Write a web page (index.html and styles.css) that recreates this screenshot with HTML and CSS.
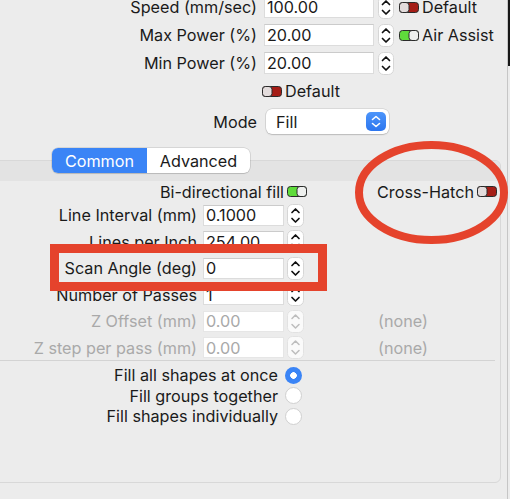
FILE: index.html
```html
<!DOCTYPE html>
<html>
<head>
<meta charset="utf-8">
<link rel="stylesheet" href="styles.css">
</head>
<body>
<div class="main">
  <section class="top">
    <div class="row">
      <span class="lbl">Speed (mm/sec)</span>
      <span class="field">100.00</span>
      <svg class="stepper" width="16" height="23" viewBox="0 0 16 23"><rect x="0.5" y="0.5" width="15" height="22" rx="5" fill="#fff" stroke="#d6d6d6"/><path d="M4.5 8.5 L8 5 L11.5 8.5" fill="none" stroke="#111" stroke-width="1.7" stroke-linecap="round" stroke-linejoin="round"/><path d="M4.5 14.5 L8 18 L11.5 14.5" fill="none" stroke="#111" stroke-width="1.7" stroke-linecap="round" stroke-linejoin="round"/></svg>
      <svg class="toggle" width="20" height="11" viewBox="0 0 20 11"><rect x="0.5" y="0.5" width="19" height="10" rx="3" fill="#a51d16" stroke="#2a2a2a"/><rect x="0.5" y="0.5" width="9.5" height="10" rx="3" fill="#e3dcdc" stroke="#2a2a2a"/></svg>
      <span class="tlbl">Default</span>
    </div>
    <div class="row">
      <span class="lbl">Max Power (%)</span>
      <span class="field">20.00</span>
      <svg class="stepper" width="16" height="23" viewBox="0 0 16 23"><rect x="0.5" y="0.5" width="15" height="22" rx="5" fill="#fff" stroke="#d6d6d6"/><path d="M4.5 8.5 L8 5 L11.5 8.5" fill="none" stroke="#111" stroke-width="1.7" stroke-linecap="round" stroke-linejoin="round"/><path d="M4.5 14.5 L8 18 L11.5 14.5" fill="none" stroke="#111" stroke-width="1.7" stroke-linecap="round" stroke-linejoin="round"/></svg>
      <svg class="toggle" width="20" height="11" viewBox="0 0 20 11"><rect x="0.5" y="0.5" width="19" height="10" rx="3" fill="#5fdc3b" stroke="#2a2a2a"/><rect x="10" y="0.5" width="9.5" height="10" rx="3" fill="#eef0ee" stroke="#2a2a2a"/></svg>
      <span class="tlbl">Air Assist</span>
    </div>
    <div class="row">
      <span class="lbl">Min Power (%)</span>
      <span class="field">20.00</span>
      <svg class="stepper" width="16" height="23" viewBox="0 0 16 23"><rect x="0.5" y="0.5" width="15" height="22" rx="5" fill="#fff" stroke="#d6d6d6"/><path d="M4.5 8.5 L8 5 L11.5 8.5" fill="none" stroke="#111" stroke-width="1.7" stroke-linecap="round" stroke-linejoin="round"/><path d="M4.5 14.5 L8 18 L11.5 14.5" fill="none" stroke="#111" stroke-width="1.7" stroke-linecap="round" stroke-linejoin="round"/></svg>
    </div>
    <div class="row row-default">
      <svg class="toggle" width="20" height="11" viewBox="0 0 20 11"><rect x="0.5" y="0.5" width="19" height="10" rx="3" fill="#a51d16" stroke="#2a2a2a"/><rect x="0.5" y="0.5" width="9.5" height="10" rx="3" fill="#e3dcdc" stroke="#2a2a2a"/></svg>
      <span class="tlbl">Default</span>
    </div>
    <div class="row row-mode">
      <span class="lbl">Mode</span>
      <div class="select">
        <span>Fill</span>
        <svg class="sel-btn" width="20" height="19" viewBox="0 0 20 19"><defs><linearGradient id="selbg" x1="0" y1="0" x2="0" y2="1"><stop offset="0" stop-color="#4d95fa"/><stop offset="1" stop-color="#2c76ef"/></linearGradient></defs><rect width="20" height="19" rx="5" fill="url(#selbg)"/><path d="M6.5 7.5 L10 4.5 L13.5 7.5" stroke="#fff" stroke-width="1.6" fill="none" stroke-linecap="round" stroke-linejoin="round"/><path d="M6.5 11.5 L10 14.5 L13.5 11.5" stroke="#fff" stroke-width="1.6" fill="none" stroke-linecap="round" stroke-linejoin="round"/></svg>
      </div>
    </div>
  </section>

  <div class="tabs">
    <span class="seg on">Common</span>
    <span class="seg">Advanced</span>
  </div>

  <div class="box">
    <div class="box-head"></div>
    <div class="opts">
      <span class="opts-l">Bi-directional fill</span>
      <svg class="toggle" width="20" height="11" viewBox="0 0 20 11"><rect x="0.5" y="0.5" width="19" height="10" rx="3" fill="#5fdc3b" stroke="#2a2a2a"/><rect x="10" y="0.5" width="9.5" height="10" rx="3" fill="#eef0ee" stroke="#2a2a2a"/></svg>
      <span class="xh">
        <span>Cross-Hatch</span>
        <svg class="toggle" width="20" height="11" viewBox="0 0 20 11"><rect x="0.5" y="0.5" width="19" height="10" rx="3" fill="#a51d16" stroke="#2a2a2a"/><rect x="0.5" y="0.5" width="9.5" height="10" rx="3" fill="#e3dcdc" stroke="#2a2a2a"/></svg>
      </span>
    </div>
    <div class="frows">
      <div class="frow">
        <span class="lbl2">Line Interval (mm)</span>
        <span class="field">0.1000</span>
        <svg class="stepper" width="17" height="23" viewBox="0 0 17 23"><rect x="0.5" y="0.5" width="16" height="22" rx="5" fill="#fff" stroke="#d6d6d6"/><path d="M5 8.5 L8.5 5 L12 8.5" fill="none" stroke="#111" stroke-width="1.7" stroke-linecap="round" stroke-linejoin="round"/><path d="M5 14.5 L8.5 18 L12 14.5" fill="none" stroke="#111" stroke-width="1.7" stroke-linecap="round" stroke-linejoin="round"/></svg>
      </div>
      <div class="frow">
        <span class="lbl2">Lines per Inch</span>
        <span class="field">254.00</span>
        <svg class="stepper" width="17" height="23" viewBox="0 0 17 23"><rect x="0.5" y="0.5" width="16" height="22" rx="5" fill="#fff" stroke="#d6d6d6"/><path d="M5 8.5 L8.5 5 L12 8.5" fill="none" stroke="#111" stroke-width="1.7" stroke-linecap="round" stroke-linejoin="round"/><path d="M5 14.5 L8.5 18 L12 14.5" fill="none" stroke="#111" stroke-width="1.7" stroke-linecap="round" stroke-linejoin="round"/></svg>
      </div>
      <div class="frow">
        <span class="lbl2">Scan Angle (deg)</span>
        <span class="field">0</span>
        <svg class="stepper" width="17" height="23" viewBox="0 0 17 23"><rect x="0.5" y="0.5" width="16" height="22" rx="5" fill="#fff" stroke="#d6d6d6"/><path d="M5 8.5 L8.5 5 L12 8.5" fill="none" stroke="#111" stroke-width="1.7" stroke-linecap="round" stroke-linejoin="round"/><path d="M5 14.5 L8.5 18 L12 14.5" fill="none" stroke="#111" stroke-width="1.7" stroke-linecap="round" stroke-linejoin="round"/></svg>
      </div>
      <div class="frow">
        <span class="lbl2">Number of Passes</span>
        <span class="field">1</span>
        <svg class="stepper" width="17" height="23" viewBox="0 0 17 23"><rect x="0.5" y="0.5" width="16" height="22" rx="5" fill="#fff" stroke="#d6d6d6"/><path d="M5 8.5 L8.5 5 L12 8.5" fill="none" stroke="#111" stroke-width="1.7" stroke-linecap="round" stroke-linejoin="round"/><path d="M5 14.5 L8.5 18 L12 14.5" fill="none" stroke="#111" stroke-width="1.7" stroke-linecap="round" stroke-linejoin="round"/></svg>
      </div>
      <div class="frow dis">
        <span class="lbl2">Z Offset (mm)</span>
        <span class="field">0.00</span>
        <svg class="stepper" width="17" height="23" viewBox="0 0 17 23"><rect x="0.5" y="0.5" width="16" height="22" rx="5" fill="#fafafa" stroke="#e2e2e2"/><path d="M5 8.5 L8.5 5 L12 8.5" fill="none" stroke="#bdbdbd" stroke-width="1.5" stroke-linecap="round" stroke-linejoin="round"/><path d="M5 14.5 L8.5 18 L12 14.5" fill="none" stroke="#bdbdbd" stroke-width="1.5" stroke-linecap="round" stroke-linejoin="round"/></svg>
        <span class="none">(none)</span>
      </div>
      <div class="frow dis">
        <span class="lbl2">Z step per pass (mm)</span>
        <span class="field">0.00</span>
        <svg class="stepper" width="17" height="23" viewBox="0 0 17 23"><rect x="0.5" y="0.5" width="16" height="22" rx="5" fill="#fafafa" stroke="#e2e2e2"/><path d="M5 8.5 L8.5 5 L12 8.5" fill="none" stroke="#bdbdbd" stroke-width="1.5" stroke-linecap="round" stroke-linejoin="round"/><path d="M5 14.5 L8.5 18 L12 14.5" fill="none" stroke="#bdbdbd" stroke-width="1.5" stroke-linecap="round" stroke-linejoin="round"/></svg>
        <span class="none">(none)</span>
      </div>
    </div>
    <div class="sep"></div>
    <div class="radios">
      <div class="rrow"><span class="rlbl">Fill all shapes at once</span><span class="radio on"></span></div>
      <div class="rrow"><span class="rlbl">Fill groups together</span><span class="radio"></span></div>
      <div class="rrow"><span class="rlbl">Fill shapes individually</span><span class="radio"></span></div>
    </div>
  </div>
</div>
<div class="edge"></div>
<svg class="marks" width="510" height="499" viewBox="0 0 510 499">
  <ellipse cx="431.5" cy="192.5" rx="72.5" ry="47.5" fill="none" stroke="#e5432c" stroke-width="8"/>
  <rect x="54.5" y="248.5" width="268" height="38" fill="none" stroke="#e5432c" stroke-width="9"/>
</svg>
</body>
</html>
```

FILE: styles.css
```css
body {
  margin: 0;
  width: 510px;
  height: 499px;
  overflow: hidden;
  display: flex;
  position: relative;
  background: #ececec;
  font-family: Inter, "Noto Sans", sans-serif;
  font-size: 16.2px;
  color: #1a1a1a;
}

.main {
  width: 507px;
  flex: none;
}

.edge {
  width: 3px;
  flex: none;
  box-sizing: border-box;
  border-left: 1px solid #c6c6c6;
  background: linear-gradient(#171717 0 66px, #ececec 66px);
}

.top {
  margin-top: -7px;
}

.row {
  display: flex;
  align-items: center;
  height: 28px;
}

.lbl {
  width: 257px;
  flex: none;
  text-align: right;
  white-space: nowrap;
}

.field {
  box-sizing: border-box;
  width: 110px;
  height: 22px;
  flex: none;
  margin-left: 7px;
  padding: 0 2px;
  display: flex;
  align-items: center;
  background: #fff;
  border: 1px solid #dcdcdc;
  border-top-color: #cbcbcb;
}

.stepper {
  display: block;
  flex: none;
  margin-left: 4px;
}

.toggle {
  display: block;
  flex: none;
  margin-left: 5px;
}

.tlbl {
  margin-left: 3px;
  white-space: nowrap;
}

.row-default {
  padding-left: 262px;
}

.row-default .toggle {
  margin-left: 0;
}

.row-mode {
  height: 33px;
}

.select {
  box-sizing: border-box;
  width: 123px;
  height: 25px;
  margin-left: 9px;
  padding: 0 3px 0 10px;
  display: flex;
  align-items: center;
  justify-content: space-between;
  background: #fff;
  border-radius: 6px;
  box-shadow: 0 0 0 0.5px rgba(0, 0, 0, 0.16), 0 1px 1.5px rgba(0, 0, 0, 0.14);
}

.sel-btn {
  display: block;
}

.tabs {
  position: relative;
  z-index: 1;
  display: flex;
  width: 198px;
  height: 25px;
  margin: 10px 0 0 52px;
  background: #fff;
  border-radius: 6px;
  overflow: hidden;
  box-shadow: 0 0 0 0.5px rgba(0, 0, 0, 0.18), 0 1px 1px rgba(0, 0, 0, 0.1);
}

.seg {
  display: flex;
  align-items: center;
  justify-content: center;
  flex: 1;
}

.seg.on {
  flex: none;
  width: 95px;
  background: #3a84f6;
  color: #fff;
}

.box {
  box-sizing: border-box;
  width: 511px;
  height: 323px;
  margin: -13px 0 0 -10px;
  border: 1px solid #d8d8d8;
  border-radius: 6px;
}

.box-head {
  height: 20px;
  background: #e3e3e3;
  border-radius: 5px 5px 0 0;
}

.opts {
  display: flex;
  align-items: center;
  height: 21px;
}

.opts-l {
  width: 293px;
  flex: none;
  text-align: right;
}

.opts .toggle {
  margin-left: 3px;
}

.xh {
  flex: 1;
  display: flex;
  align-items: center;
  justify-content: flex-end;
  padding-right: 3px;
}

.frow {
  display: flex;
  align-items: center;
  height: 26.5px;
}

.lbl2 {
  width: 206px;
  flex: none;
  text-align: right;
  white-space: nowrap;
}

.frow .field {
  width: 81px;
  height: 21px;
  margin-left: 6px;
}

.frow .stepper {
  margin-left: 3px;
}

.dis {
  color: #a9a9a9;
}

.dis .field {
  border-color: #e6e6e6;
}

.none {
  margin-left: 74px;
}

.sep {
  height: 1px;
  margin: -1px 5px 0 0;
  background: #d3d3d3;
}

.radios {
  padding-top: 4px;
}

.rrow {
  display: flex;
  align-items: center;
  height: 20.5px;
}

.rlbl {
  width: 287px;
  flex: none;
  text-align: right;
  white-space: nowrap;
}

.radio {
  box-sizing: border-box;
  width: 17px;
  height: 17px;
  margin-left: 7px;
  border-radius: 50%;
  background: #fff;
  border: 1px solid #d0d0d0;
}

.radio.on {
  border: none;
  background: radial-gradient(circle, #fff 0 3px, #3a84f6 3.6px);
}

.marks {
  position: absolute;
  left: 0;
  top: 0;
  pointer-events: none;
}
```
